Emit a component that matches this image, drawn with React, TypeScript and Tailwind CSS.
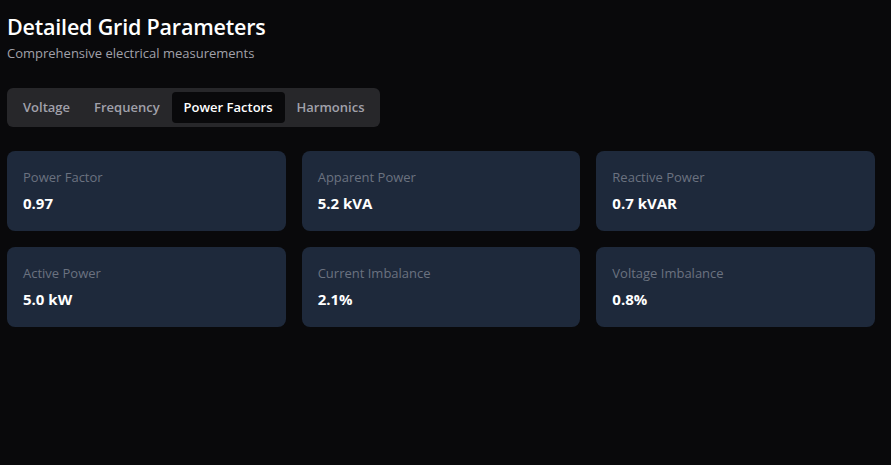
import React, { useState } from 'react';

const tabs = ['Voltage', 'Frequency', 'Power Factors', 'Harmonics'];

const metrics = [
  { label: 'Power Factor', value: '0.97' },
  { label: 'Apparent Power', value: '5.2 kVA' },
  { label: 'Reactive Power', value: '0.7 kVAR' },
  { label: 'Active Power', value: '5.0 kW' },
  { label: 'Current Imbalance', value: '2.1%' },
  { label: 'Voltage Imbalance', value: '0.8%' },
];

export default function App() {
  const [active, setActive] = useState('Power Factors');

  return (
    <div className="min-h-screen bg-[#09090b] text-white font-['Open_Sans',sans-serif] pl-[7px] pr-[16px] pt-[12px]">
      {/* Header */}
      <h1 className="text-[21.5px] font-semibold leading-[30px] tracking-[-0.2px]">Detailed Grid Parameters</h1>
      <p className="text-[13px] text-[#a1a1aa] leading-[18px] mt-[2px]">Comprehensive electrical measurements</p>

      {/* Tabs */}
      <div className="inline-flex items-center gap-0 bg-[#27272a] rounded-md p-1 mt-[26px] h-[39px]">
        {tabs.map((t) => (
          <button
            key={t}
            onClick={() => setActive(t)}
            className={
              t === active
                ? 'h-[31px] px-3 rounded-[4px] bg-[#09090b] text-white text-[13px] font-semibold'
                : 'h-[31px] px-3 rounded-[4px] text-[#a1a1aa] text-[13px] font-semibold'
            }
          >
            {t}
          </button>
        ))}
      </div>

      {/* Metric cards */}
      <div className="grid grid-cols-3 gap-x-4 gap-y-4 mt-[24px]">
        {metrics.map((m) => (
          <div key={m.label} className="bg-[#1e293b] rounded-lg h-[80px] px-4 pt-[17px]">
            <div className="text-[13px] text-[#6b7280] leading-[18px]">{m.label}</div>
            <div className="text-[15px] font-bold leading-[20px] mt-[7px]">{m.value}</div>
          </div>
        ))}
      </div>
    </div>
  );
}
